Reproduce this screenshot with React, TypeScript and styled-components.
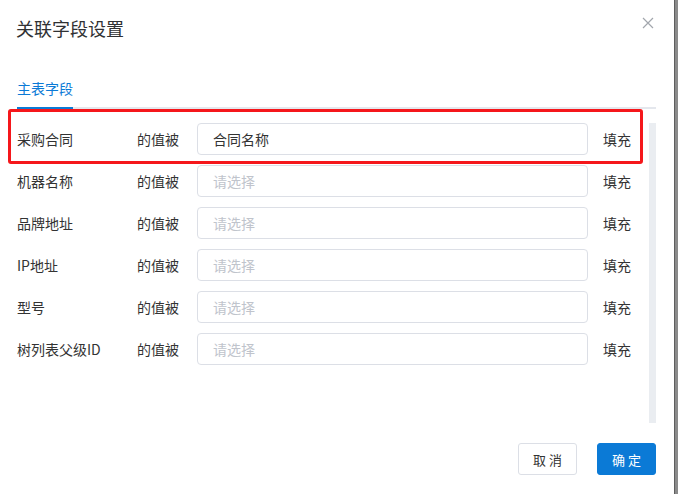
import React from "react";
import styled, { createGlobalStyle } from "styled-components";

const Global = createGlobalStyle`
  html, body { margin: 0; padding: 0; }
  body {
    background: #8a8a8a;
    font-family: "Noto Sans CJK SC", "Noto Sans", "Liberation Sans", sans-serif;
    width: 678px;
    height: 494px;
    overflow: hidden;
  }
`;

const Page = styled.div`
  display: flex;
  width: 678px;
  height: 494px;
`;

const Modal = styled.div`
  position: relative;
  width: 675px;
  height: 494px;
  background: #fff;
  border-right: 1px solid #5e5e5e;
  display: flex;
  flex-direction: column;
  box-sizing: border-box;
`;

const Header = styled.div`
  padding: 16px 17px 0 16px;
  height: 53px;
  box-sizing: border-box;
`;

const Title = styled.div`
  font-size: 18px;
  line-height: 24px;
  color: #303133;
`;

const Close = styled.button`
  position: absolute;
  top: 17px;
  right: 20px;
  width: 12px;
  height: 12px;
  padding: 0;
  border: 0;
  background: transparent;
  display: flex;
`;

const Body = styled.div`
  padding: 16px 18px 0 17px;
  display: flex;
  flex-direction: column;
`;

const TabBar = styled.div`
  height: 40px;
  display: flex;
  box-shadow: inset 0 -2px 0 #e4e7ed;
`;

const Tab = styled.div<{ $active?: boolean }>`
  font-size: 14px;
  line-height: 38px;
  color: ${(p) => (p.$active ? "#0b7ad6" : "#303133")};
  border-bottom: 2px solid ${(p) => (p.$active ? "#0b7ad6" : "transparent")};
`;

const ScrollArea = styled.div`
  position: relative;
  margin-top: 14px;
  height: 300px;
  display: flex;
`;

const Rows = styled.div`
  flex: 1;
  display: flex;
  flex-direction: column;
  gap: 10px;
`;

const Track = styled.div`
  width: 7px;
  background: #eaedf1;
`;

const Row = styled.div`
  display: flex;
  align-items: center;
  height: 32px;
  font-size: 14px;
  color: #333;
`;

const Label = styled.div`
  width: 120px;
`;

const Middle = styled.div`
  width: 60px;
`;

const Input = styled.div<{ $empty?: boolean }>`
  width: 391px;
  height: 32px;
  box-sizing: border-box;
  border: 1px solid #dcdfe6;
  border-radius: 4px;
  padding: 0 15px;
  display: flex;
  align-items: center;
  font-size: 14px;
  color: ${(p) => (p.$empty ? "#c0c4cc" : "#333")};
`;

const Fill = styled.div`
  margin-left: 15px;
`;

const Highlight = styled.div`
  position: absolute;
  left: -9px;
  top: -14px;
  width: 635px;
  height: 55px;
  border: 3px solid #f5171b;
  border-radius: 3px;
  box-sizing: border-box;
  pointer-events: none;
`;

const Footer = styled.div`
  display: flex;
  justify-content: flex-end;
  gap: 20px;
  padding: 20px 18px 0 0;
`;

const Button = styled.button<{ $primary?: boolean }>`
  width: 59px;
  height: 32px;
  border-radius: 3px;
  font-family: inherit;
  font-size: 13px;
  padding: 0;
  border: 1px solid ${(p) => (p.$primary ? "#0b7ad6" : "#dcdfe6")};
  background: ${(p) => (p.$primary ? "#0b7ad6" : "#fff")};
  color: ${(p) => (p.$primary ? "#fff" : "#333")};
`;

const rows = [
  { label: "采购合同", value: "合同名称" },
  { label: "机器名称" },
  { label: "品牌地址" },
  { label: "IP地址" },
  { label: "型号" },
  { label: "树列表父级ID" },
];

export default function App() {
  return (
    <Page>
      <Global />
      <Modal>
        <Header>
          <Title>关联字段设置</Title>
        </Header>
        <Close aria-label="close">
          <svg width="12" height="12" viewBox="0 0 12 12">
            <path d="M1 1 L11 11 M11 1 L1 11" stroke="#a2a6ad" strokeWidth="1.2" fill="none" />
          </svg>
        </Close>
        <Body>
          <TabBar>
            <Tab $active>主表字段</Tab>
          </TabBar>
          <ScrollArea>
            <Rows>
              {rows.map((r) => (
                <Row key={r.label}>
                  <Label>{r.label}</Label>
                  <Middle>的值被</Middle>
                  <Input $empty={!r.value}>{r.value ?? "请选择"}</Input>
                  <Fill>填充</Fill>
                </Row>
              ))}
            </Rows>
            <Track />
            <Highlight />
          </ScrollArea>
        </Body>
        <Footer>
          <Button>取 消</Button>
          <Button $primary>确 定</Button>
        </Footer>
      </Modal>
    </Page>
  );
}
